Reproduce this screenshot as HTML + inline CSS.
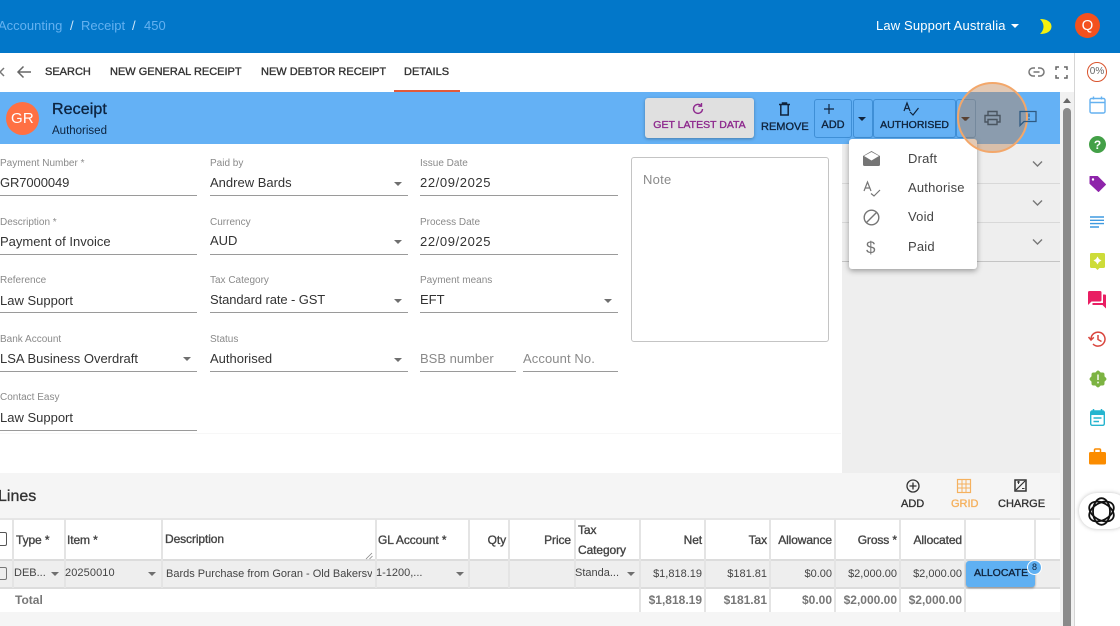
<!DOCTYPE html>
<html><head><meta charset="utf-8"><style>
*{box-sizing:border-box}
html,body{margin:0;padding:0;width:1120px;height:626px;overflow:hidden;background:#fff;font-family:"Liberation Sans",sans-serif;color:#333}
.a,.t,.l,.v,.u,.c,.th,.td,.r{position:absolute}
.t{white-space:nowrap;line-height:16px}
.m{-webkit-text-stroke:.35px currentColor}
.l{font-size:10px;color:#8a8a8a;white-space:nowrap;line-height:12px;margin-top:1px}
.v{font-size:13px;color:#333;white-space:nowrap;line-height:16px}
.u{height:1px;background:#9a9a9a}
.c{width:0;height:0;border-left:4.5px solid transparent;border-right:4.5px solid transparent;border-top:4.5px solid #6f6f6f}
.tab{position:absolute;top:65px;font-size:11px;color:#333;line-height:14px;white-space:nowrap;-webkit-text-stroke:.35px #333}
.th{font-size:12px;color:#444;line-height:20px;white-space:nowrap;-webkit-text-stroke:.35px #444;letter-spacing:-.1px}
.td{font-size:11px;color:#444;line-height:14px;white-space:nowrap}
.r{text-align:right}
.vl{position:absolute;top:519px;height:93px;width:1.500px;background:#e4e4e4}
svg{position:absolute;overflow:visible}
</style></head><body>
<!-- header -->
<div class="a" style="left:0;top:0;width:1120px;height:53px;background:#0277c9"></div>
<div class="t" style="left:-2px;top:18px;font-size:13px;color:#64b1f0">Accounting</div>
<div class="t" style="left:70px;top:18px;font-size:13px;color:#cfe6f8">/</div>
<div class="t" style="left:81px;top:18px;font-size:13px;color:#64b1f0">Receipt</div>
<div class="t" style="left:132px;top:18px;font-size:13px;color:#cfe6f8">/</div>
<div class="t" style="left:144px;top:18px;font-size:13px;color:#64b1f0">450</div>
<div class="t" style="left:876px;top:18px;font-size:13px;color:#fff;letter-spacing:.15px">Law Support Australia</div>
<div class="c" style="left:1011px;top:24px;border-top-color:#fff"></div>
<svg style="left:1039px;top:19px" width="13" height="15" viewBox="0 0 13 15"><path d="M1 0C8 0 12.500 3 12.500 7.500C12.500 12 8 15 1 15C3.500 12.500 4.500 10 4.500 7.500C4.500 5 3.500 2.500 1 0Z" fill="#f5f10f"/></svg>
<div class="a" style="left:1075px;top:13px;width:25px;height:25px;border-radius:50%;background:#f4511e"></div>
<div class="t" style="left:1075px;top:18px;width:25px;text-align:center;font-size:15px;color:#fff">Q</div>

<!-- tabs -->
<svg style="left:0;top:66px" width="6" height="12" viewBox="0 0 6 12"><path d="M4 2L0 6L4 10" fill="none" stroke="#777" stroke-width="1.500"/></svg>
<svg style="left:16px;top:65px" width="16" height="14" viewBox="0 0 16 14"><path d="M15 7H2M7.500 1.500L2 7L7.500 12.500" fill="none" stroke="#666" stroke-width="1.500"/></svg>
<div class="tab" style="left:45px">SEARCH</div>
<div class="tab" style="left:110px">NEW GENERAL RECEIPT</div>
<div class="tab" style="left:261px">NEW DEBTOR RECEIPT</div>
<div class="tab" style="left:404px">DETAILS</div>
<div class="a" style="left:394px;top:90px;width:66px;height:2px;background:#e25a3a"></div>
<svg style="left:1028px;top:65px" width="17" height="14" viewBox="0 0 17 14"><path d="M7 3H5A4 4 0 0 0 5 11H7M10 3H12A4 4 0 0 1 12 11H10M5.500 7H11.500" fill="none" stroke="#777" stroke-width="1.500"/></svg>
<svg style="left:1055px;top:66px" width="13" height="13" viewBox="0 0 13 13"><path d="M1 4V1H4M9 1H12V4M12 9V12H9M4 12H1V9" fill="none" stroke="#666" stroke-width="1.500"/></svg>

<!-- blue bar -->
<div class="a" style="left:0;top:92px;width:1060px;height:52px;background:#64b1f5"></div>
<div class="a" style="left:6px;top:102px;width:33px;height:33px;border-radius:50%;background:#ff7043"></div>
<div class="t" style="left:6px;top:111px;width:33px;text-align:center;font-size:15px;color:#fff;letter-spacing:.2px">GR</div>
<div class="t m" style="left:52px;top:102px;font-size:16px;color:#0d2440;letter-spacing:.1px">Receipt</div>
<div class="t" style="left:52px;top:123px;font-size:11.500px;color:#0d2440">Authorised</div>

<div class="a" style="left:645px;top:98px;width:109px;height:40px;background:#e0e0e0;border-radius:3px;box-shadow:0 1px 3px rgba(0,0,0,.3)"></div>
<svg style="left:691px;top:102px" width="14" height="14" viewBox="0 0 14 14"><path d="M11.500 7A4.500 4.500 0 1 1 10 3.500M10.500 1V4.200H7.300" fill="none" stroke="#8e2a8e" stroke-width="1.400"/></svg>
<div class="t m" style="left:645px;top:117px;width:109px;text-align:center;font-size:10.500px;color:#8e2a8e">GET LATEST DATA</div>
<svg style="left:778px;top:102px" width="13" height="14" viewBox="0 0 13 14"><path d="M1 2.500H12M4.500 2.500V1H8.500V2.500M2.800 2.500V13H10.200V2.500" fill="none" stroke="#10243d" stroke-width="1.500"/></svg>
<div class="t m" style="left:761px;top:119px;font-size:11px;color:#10243d">REMOVE</div>

<div class="a" style="left:814px;top:99px;width:38px;height:39px;border:1px solid #3f8fd6;border-radius:3px"></div>
<div class="a" style="left:853px;top:99px;width:20px;height:39px;border:1px solid #3f8fd6;border-radius:3px"></div>
<div class="a" style="left:873px;top:99px;width:83px;height:39px;border:1px solid #3f8fd6;border-radius:3px"></div>
<div class="a" style="left:956px;top:99px;width:20px;height:39px;border:1px solid #3f8fd6;border-radius:3px"></div>
<svg style="left:823px;top:103px" width="12" height="12" viewBox="0 0 12 12"><path d="M6 1V11M1 6H11" stroke="#10243d" stroke-width="1.200"/></svg>
<div class="t m" style="left:814px;top:117px;width:38px;text-align:center;font-size:11px;color:#10243d">ADD</div>
<div class="c" style="left:858px;top:117px;border-top-color:#10243d"></div>
<svg style="left:903px;top:102px" width="16" height="14" viewBox="0 0 16 14"><path d="M1 9L4 1L7 9M2 6.500H6M7 10L10 13L15.500 6" fill="none" stroke="#10243d" stroke-width="1.200"/></svg>
<div class="t m" style="left:873px;top:117px;width:83px;text-align:center;font-size:10.500px;color:#10243d">AUTHORISED</div>
<div class="c" style="left:962px;top:117px;border-top-color:#10243d"></div>

<!-- form -->
<div class="l" style="left:0;top:157px">Payment Number *</div><div class="v" style="left:0;top:175px;letter-spacing:-.1px">GR7000049</div><div class="u" style="left:0;top:195px;width:197px"></div>
<div class="l" style="left:0;top:216px">Description *</div><div class="v" style="left:0;top:234px">Payment of Invoice</div><div class="u" style="left:0;top:254px;width:197px"></div>
<div class="l" style="left:0;top:274px">Reference</div><div class="v" style="left:0;top:293px">Law Support</div><div class="u" style="left:0;top:312px;width:197px"></div>
<div class="l" style="left:0;top:333px">Bank Account</div><div class="v" style="left:0;top:351px">LSA Business Overdraft</div><div class="u" style="left:0;top:371px;width:197px"></div><div class="c" style="left:183px;top:357px"></div>
<div class="l" style="left:0;top:391px">Contact Easy</div><div class="v" style="left:0;top:410px">Law Support</div><div class="u" style="left:0;top:430px;width:197px"></div>

<div class="l" style="left:210px;top:157px">Paid by</div><div class="v" style="left:210px;top:175px">Andrew Bards</div><div class="u" style="left:210px;top:195px;width:198px"></div><div class="c" style="left:394px;top:182px"></div>
<div class="l" style="left:210px;top:216px">Currency</div><div class="v" style="left:210px;top:233px">AUD</div><div class="u" style="left:210px;top:254px;width:198px"></div><div class="c" style="left:394px;top:240px"></div>
<div class="l" style="left:210px;top:274px">Tax Category</div><div class="v" style="left:210px;top:292px;letter-spacing:-.1px">Standard rate - GST</div><div class="u" style="left:210px;top:312px;width:198px"></div><div class="c" style="left:394px;top:299px"></div>
<div class="l" style="left:210px;top:333px">Status</div><div class="v" style="left:210px;top:351px">Authorised</div><div class="u" style="left:210px;top:371px;width:198px"></div><div class="c" style="left:394px;top:358px"></div>

<div class="l" style="left:420px;top:157px">Issue Date</div><div class="v" style="left:420px;top:175px;letter-spacing:.6px">22/09/2025</div><div class="u" style="left:420px;top:195px;width:198px"></div>
<div class="l" style="left:420px;top:216px">Process Date</div><div class="v" style="left:420px;top:234px;letter-spacing:.6px">22/09/2025</div><div class="u" style="left:420px;top:254px;width:198px"></div>
<div class="l" style="left:420px;top:274px">Payment means</div><div class="v" style="left:420px;top:292px">EFT</div><div class="u" style="left:420px;top:312px;width:198px"></div><div class="c" style="left:604px;top:299px"></div>
<div class="v" style="left:420px;top:351px;color:#8a8a8a">BSB number</div><div class="u" style="left:420px;top:371px;width:96px"></div>
<div class="v" style="left:523px;top:351px;color:#8a8a8a;letter-spacing:.1px">Account No.</div><div class="u" style="left:523px;top:371px;width:95px"></div>

<div class="a" style="left:631px;top:157px;width:198px;height:185px;border:1px solid #c4c4c4;border-radius:3px"></div>
<div class="v" style="left:643px;top:172px;color:#8a8a8a;letter-spacing:.25px">Note</div>
<div class="a" style="left:0;top:433px;width:841px;height:1px;background:#f7f7f7"></div>

<!-- right panel -->
<div class="a" style="left:842px;top:144px;width:218px;height:329px;background:#eeeeee"></div>
<div class="a" style="left:842px;top:183px;width:218px;height:1px;background:#d8d8d8"></div>
<div class="a" style="left:842px;top:222px;width:218px;height:1px;background:#d8d8d8"></div>
<div class="a" style="left:842px;top:261px;width:218px;height:1px;background:#c4c4c4"></div>
<svg style="left:1032px;top:160px" width="11" height="8" viewBox="0 0 11 8"><path d="M1 1.500L5.500 6L10 1.500" fill="none" stroke="#777" stroke-width="1.400"/></svg>
<svg style="left:1032px;top:199px" width="11" height="8" viewBox="0 0 11 8"><path d="M1 1.500L5.500 6L10 1.500" fill="none" stroke="#777" stroke-width="1.400"/></svg>
<svg style="left:1032px;top:238px" width="11" height="8" viewBox="0 0 11 8"><path d="M1 1.500L5.500 6L10 1.500" fill="none" stroke="#777" stroke-width="1.400"/></svg>

<!-- lines -->
<div class="a" style="left:0;top:473px;width:1060px;height:153px;background:#f5f5f5"></div>
<div class="t m" style="left:-2px;top:489px;font-size:16px;color:#333">Lines</div>
<svg style="left:906px;top:479px" width="14" height="14" viewBox="0 0 14 14"><circle cx="7" cy="7" r="6" fill="none" stroke="#333" stroke-width="1.300"/><path d="M7 3.500V10.500M3.500 7H10.500" stroke="#333" stroke-width="1.300"/></svg>
<div class="t m" style="left:901px;top:496px;font-size:11px;color:#333">ADD</div>
<svg style="left:957px;top:479px" width="14" height="14" viewBox="0 0 14 14"><rect x=".5" y=".5" width="13" height="13" fill="none" stroke="#f5b15e" stroke-width="1.200"/><path d="M5 1V13M9 1V13M1 5H13M1 9H13" stroke="#f5b15e"/></svg>
<div class="t m" style="left:951px;top:496px;font-size:11px;color:#f5b15e">GRID</div>
<svg style="left:1014px;top:479px" width="13" height="13" viewBox="0 0 13 13"><rect x="1" y="1" width="11" height="11" fill="none" stroke="#333" stroke-width="1.500"/><path d="M2 11L11 2" stroke="#333" stroke-width="1.200"/><path d="M3 3H6M4.500 2V5M8 9.500H10.500" stroke="#333"/></svg>
<div class="t m" style="left:998px;top:496px;font-size:11px;color:#333">CHARGE</div>

<div class="a" style="left:0;top:519px;width:1060px;height:41px;background:#fff"></div>
<div class="a" style="left:0;top:560px;width:1060px;height:27px;background:#eeeeee"></div>
<div class="a" style="left:0;top:587px;width:1060px;height:25px;background:#fff"></div>
<div class="a" style="left:0;top:518px;width:1060px;height:2px;background:#e6e6e6"></div>
<div class="a" style="left:0;top:559px;width:1060px;height:2px;background:#dcdcdc"></div>
<div class="a" style="left:0;top:587px;width:1060px;height:2px;background:#dcdcdc"></div>

<div class="vl" style="left:12px;height:69px"></div><div class="vl" style="left:64px;height:69px"></div><div class="vl" style="left:161px;height:69px"></div><div class="vl" style="left:375px;height:69px"></div><div class="vl" style="left:468px;height:69px"></div><div class="vl" style="left:508px;height:69px"></div><div class="vl" style="left:574px;height:69px"></div>
<div class="vl" style="left:639px"></div><div class="vl" style="left:704px"></div><div class="vl" style="left:769px"></div><div class="vl" style="left:834px"></div><div class="vl" style="left:899px"></div><div class="vl" style="left:964px;"></div><div class="vl" style="left:1034px;height:41px"></div>

<div class="a" style="left:-5px;top:532px;width:12px;height:14px;border:1.500px solid #555;border-radius:2px"></div>
<div class="a" style="left:-5px;top:567px;width:12px;height:13px;border:1.500px solid #777;border-radius:2px"></div>
<div class="th" style="left:16px;top:530px">Type *</div>
<div class="th" style="left:67px;top:530px">Item *</div>
<div class="th" style="left:165px;top:529px">Description</div>
<svg style="left:366px;top:553px" width="7" height="6" viewBox="0 0 7 6"><path d="M0 6L6 0M3.500 6L6.500 3" stroke="#888" stroke-width=".8"/></svg>
<div class="th" style="left:378px;top:530px">GL Account *</div>
<div class="th r" style="left:468px;top:530px;width:38px">Qty</div>
<div class="th r" style="left:509px;top:530px;width:62px">Price</div>
<div class="th" style="left:578px;top:520px">Tax<br>Category</div>
<div class="th r" style="left:640px;top:530px;width:62px">Net</div>
<div class="th r" style="left:705px;top:530px;width:62px">Tax</div>
<div class="th r" style="left:770px;top:530px;width:62px">Allowance</div>
<div class="th r" style="left:835px;top:530px;width:62px">Gross *</div>
<div class="th r" style="left:900px;top:530px;width:62px">Allocated</div>

<div class="td" style="left:14px;top:566px">DEB...</div><div class="c" style="left:51px;top:572px"></div>
<div class="td" style="left:65px;top:566px;letter-spacing:.1px">20250010</div><div class="c" style="left:148px;top:572px"></div>
<div class="td" style="left:166px;top:567px;width:206px;overflow:hidden">Bards Purchase from Goran - Old Bakersville</div>
<div class="td" style="left:376px;top:566px">1-1200,...</div><div class="c" style="left:456px;top:572px"></div>
<div class="td" style="left:575px;top:566px">Standa...</div><div class="c" style="left:627px;top:572px"></div>
<div class="td r" style="left:640px;top:567px;width:62px">$1,818.19</div>
<div class="td r" style="left:705px;top:567px;width:62px">$181.81</div>
<div class="td r" style="left:770px;top:567px;width:62px">$0.00</div>
<div class="td r" style="left:835px;top:567px;width:62px">$2,000.00</div>
<div class="td r" style="left:900px;top:567px;width:62px">$2,000.00</div>
<div class="a" style="left:966px;top:561px;width:69px;height:26px;background:#5fb0f2;border-radius:3px;box-shadow:0 1px 2px rgba(0,0,0,.4)"></div>
<div class="t m" style="left:974px;top:565px;font-size:10.500px;color:#10243d">ALLOCATE</div>
<div class="a" style="left:1027px;top:560px;width:15px;height:15px;border-radius:50%;background:#5fb0f2;border:1.500px solid #fff"></div>
<div class="t" style="left:1027px;top:559px;width:15px;text-align:center;font-size:9px;color:#10243d">8</div>

<div class="td" style="left:15px;top:593px;font-weight:bold;color:#777;font-size:12px">Total</div>
<div class="td r" style="left:640px;top:593px;width:62px;font-weight:bold;color:#777;font-size:12px">$1,818.19</div>
<div class="td r" style="left:705px;top:593px;width:62px;font-weight:bold;color:#777;font-size:12px">$181.81</div>
<div class="td r" style="left:770px;top:593px;width:62px;font-weight:bold;color:#777;font-size:12px">$0.00</div>
<div class="td r" style="left:835px;top:593px;width:62px;font-weight:bold;color:#777;font-size:12px">$2,000.00</div>
<div class="td r" style="left:900px;top:593px;width:62px;font-weight:bold;color:#777;font-size:12px">$2,000.00</div>

<!-- scrollbar & sidebar -->
<div class="a" style="left:1060px;top:92px;width:14px;height:534px;background:#f1f1f1"></div>
<div class="a" style="left:1063px;top:108px;width:8px;height:518px;background:#8a8a8a;border-radius:4px 4px 0 0"></div>
<div class="a" style="left:1063px;top:98px;width:0;height:0;border-left:4px solid transparent;border-right:4px solid transparent;border-bottom:5px solid #666"></div>
<div class="a" style="left:1074px;top:53px;width:1px;height:573px;background:#d5d5d5"></div>

<div class="a" style="left:1087px;top:62px;width:20px;height:20px;border:1.500px solid #d9532c;border-radius:50%"></div>
<div class="t" style="left:1087px;top:64px;width:20px;text-align:center;font-size:10px;color:#666">0%</div>
<svg style="left:1089px;top:96px" width="17" height="18" viewBox="0 0 17 18"><rect x="1" y="2.500" width="15" height="14.500" rx="1.500" fill="none" stroke="#64b1f0" stroke-width="1.400"/><path d="M1 6.500H16M4.500 .5V3.500M12.500 .5V3.500" stroke="#64b1f0" stroke-width="1.400"/></svg>
<div class="a" style="left:1089px;top:136px;width:17px;height:17px;border-radius:50%;background:#43a047"></div>
<div class="t" style="left:1089px;top:137px;width:17px;text-align:center;font-size:12px;font-weight:bold;color:#fff">?</div>
<svg style="left:1089px;top:175px" width="17" height="17" viewBox="0 0 17 17"><path d="M1 1.500H8.500L16.500 9.500L9.500 16.500L1 8.500Z" fill="#8e24aa" stroke="#8e24aa" stroke-linejoin="round"/><circle cx="4" cy="4.500" r="1.200" fill="#fff"/></svg>
<svg style="left:1090px;top:216px" width="14" height="12" viewBox="0 0 14 12"><path d="M0 1H14M0 4.300H14M0 7.600H14M0 11H9" stroke="#3f9ae0" stroke-width="1.400"/></svg>
<svg style="left:1090px;top:253px" width="15" height="17" viewBox="0 0 15 17"><path d="M1.500 0H13.500A1.500 1.500 0 0 1 15 1.500V13.500A1.500 1.500 0 0 1 13.500 15H9.500L7.500 17L5.500 15H1.500A1.500 1.500 0 0 1 0 13.500V1.500A1.500 1.500 0 0 1 1.500 0Z" fill="#cddc39"/><path d="M7.500 3.500L9 6L11.500 7.500L9 9L7.500 11.500L6 9L3.500 7.500L6 6Z" fill="#fff"/></svg>
<svg style="left:1088px;top:291px" width="18" height="18" viewBox="0 0 18 18"><path d="M0 1.500A1.500 1.500 0 0 1 1.500 0H12A1.500 1.500 0 0 1 13.500 1.500V9A1.500 1.500 0 0 1 12 10.500H3.500L0 14Z" fill="#e91e63"/><path d="M15 3.500H17A1 1 0 0 1 18 4.500V17.500L14.500 14H4.500V12H15Z" fill="#e91e63"/></svg>
<svg style="left:1088px;top:331px" width="18" height="16" viewBox="0 0 18 16"><path d="M3 8A7 7 0 1 1 5 13M0.500 6L3 9L5.800 6.300M10 4V8.500L13.500 10.500" fill="none" stroke="#d9463e" stroke-width="1.500"/></svg>
<svg style="left:1089px;top:370px" width="18" height="18" viewBox="0 0 18 18"><rect x="2.500" y="2.500" width="13" height="13" rx="2" fill="#7cb342"/><rect x="2.500" y="2.500" width="13" height="13" rx="2" fill="#7cb342" transform="rotate(45 9 9)"/><path d="M9 4.500V10" stroke="#e8f2dc" stroke-width="1.700"/><circle cx="9" cy="12.500" r="1" fill="#e8f2dc"/></svg>
<svg style="left:1090px;top:409px" width="15" height="17" viewBox="0 0 15 17"><rect x=".7" y="2" width="13.600" height="14.300" rx="1.500" fill="none" stroke="#26b5cf" stroke-width="1.400"/><path d="M.7 2.500H14.300V6H.7Z" fill="#26b5cf"/><path d="M3.500 0V3M11.500 0V3" stroke="#26b5cf" stroke-width="1.500"/><path d="M3.500 9H11.500M3.500 12.500H9" stroke="#26b5cf" stroke-width="1.400"/></svg>
<svg style="left:1089px;top:448px" width="17" height="17" viewBox="0 0 17 17"><rect x="0" y="4" width="17" height="12.500" rx="1.500" fill="#fb8c00"/><path d="M5.500 4.500V2A1 1 0 0 1 6.500 1H10.500A1 1 0 0 1 11.500 2V4.500" fill="none" stroke="#fb8c00" stroke-width="1.500"/></svg>
<div class="a" style="left:1079px;top:493px;width:50px;height:36px;border-radius:18px;background:#fff;box-shadow:0 0 4px rgba(0,0,0,.25)"></div>
<svg style="left:1087px;top:497px" width="29" height="29" viewBox="0 0 29 29"><g fill="none" stroke="#111" stroke-width="1.800"><ellipse cx="14.500" cy="14.500" rx="13.300" ry="8.500" transform="rotate(90 14.500 14.500)"/><ellipse cx="14.500" cy="14.500" rx="13.300" ry="8.500" transform="rotate(30 14.500 14.500)"/><ellipse cx="14.500" cy="14.500" rx="13.300" ry="8.500" transform="rotate(150 14.500 14.500)"/></g></svg>

<!-- menu -->
<div class="a" style="left:849px;top:139px;width:128px;height:130px;background:#fff;border-radius:3px;box-shadow:0 2px 6px rgba(0,0,0,.35)"></div>
<svg style="left:863px;top:151px" width="17" height="15" viewBox="0 0 17 15"><path d="M0 5L8.500 0L17 5V13.500A1.500 1.500 0 0 1 15.500 15H1.500A1.500 1.500 0 0 1 0 13.500Z" fill="#757575"/><path d="M1 5L8.500 9.500L16 5L8.500 1Z" fill="#fff"/></svg>
<div class="t" style="left:908px;top:151px;font-size:13px;color:#444;letter-spacing:.2px">Draft</div>
<svg style="left:863px;top:181px" width="18" height="16" viewBox="0 0 18 16"><path d="M1 10L4.500 1L8 10M2.300 7H6.700M8 12.500L11 15L17 9" fill="none" stroke="#757575" stroke-width="1.200"/></svg>
<div class="t" style="left:908px;top:180px;font-size:13px;color:#444;letter-spacing:.2px">Authorise</div>
<svg style="left:863px;top:209px" width="17" height="17" viewBox="0 0 17 17"><circle cx="8.500" cy="8.500" r="7.300" fill="none" stroke="#757575" stroke-width="1.400"/><path d="M3.500 13.500L13.500 3.500" stroke="#757575" stroke-width="1.400"/></svg>
<div class="t" style="left:908px;top:209px;font-size:13px;color:#444;letter-spacing:.2px">Void</div>
<div class="t" style="left:866px;top:239px;font-size:17px;color:#757575;line-height:18px">$</div>
<div class="t" style="left:908px;top:239px;font-size:13px;color:#444;letter-spacing:.2px">Paid</div>

<!-- highlight -->
<div class="a" style="left:957px;top:82px;width:71px;height:71px;border-radius:50%;background:rgba(190,130,80,.43);border:2.500px solid #f3a76a"></div>
<svg style="left:984px;top:110px" width="17" height="16" viewBox="0 0 17 16"><path d="M4 5V1.500H13V5M4 12H1V5.500H16V12H13M4 9.500H13V14.500H4Z" fill="none" stroke="#4a5560" stroke-width="1.400"/></svg>
<svg style="left:1019px;top:110px" width="18" height="17" viewBox="0 0 18 17"><path d="M1 1.500H17V11.500H5L1 15.500Z" fill="none" stroke="#2f5a82" stroke-width="1.300"/><path d="M10 3.500V7M10 8.500V10" stroke="#2f5a82" stroke-width="1.100"/></svg>
<div class="c" style="left:961px;top:117px;border-top-color:#5a4030"></div>
</body></html>
